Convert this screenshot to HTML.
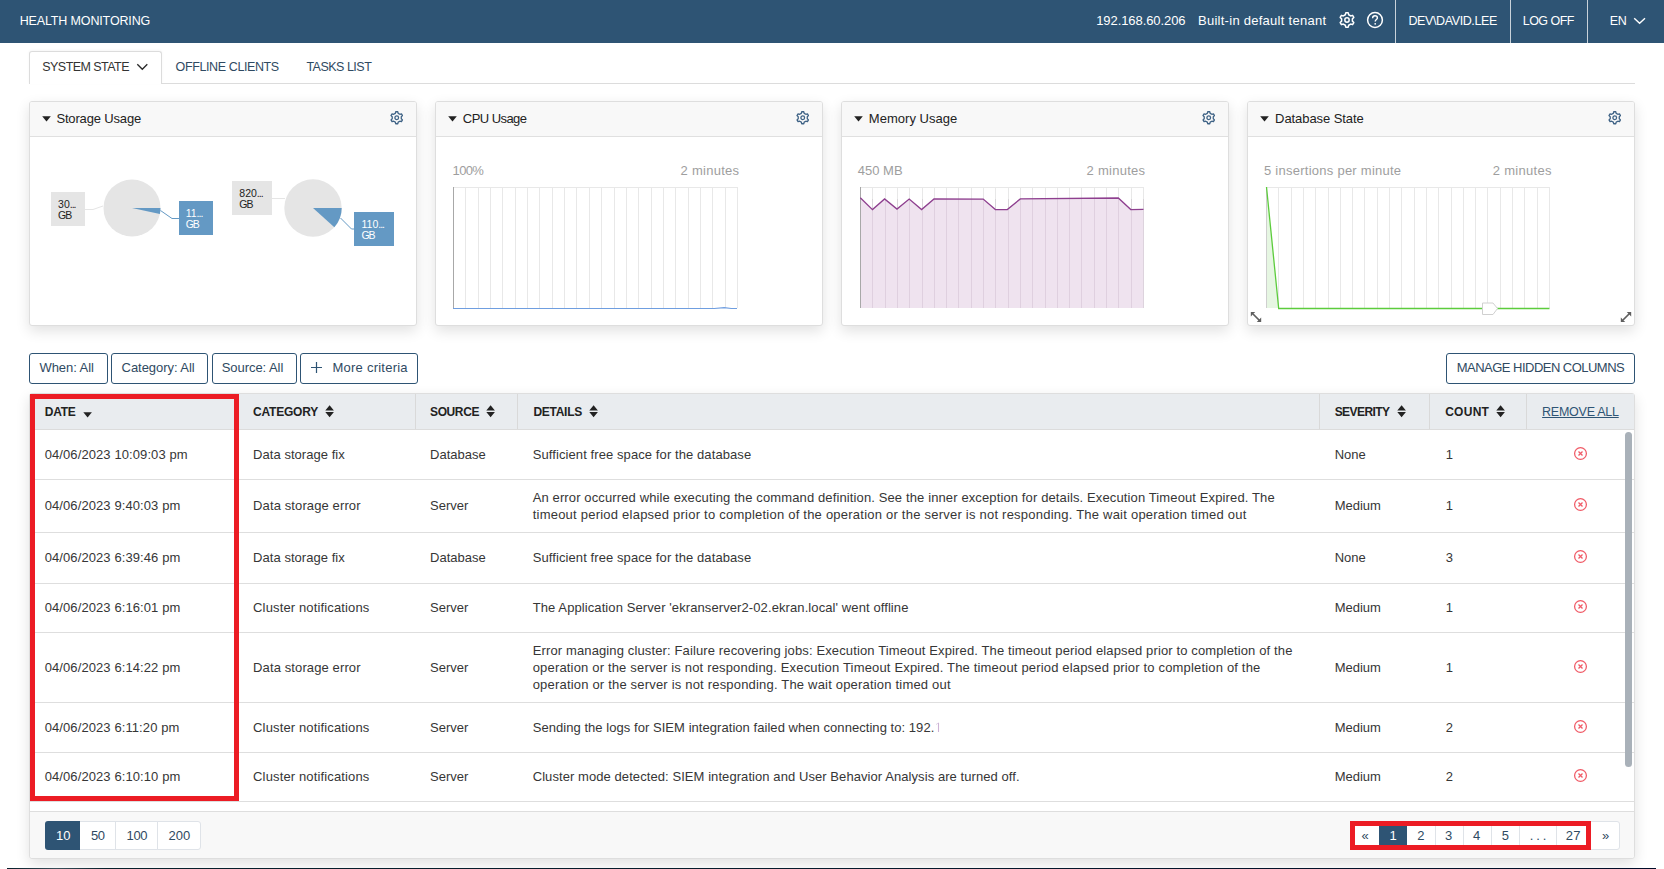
<!DOCTYPE html><html><head><meta charset="utf-8"><style>
*{box-sizing:border-box;margin:0;padding:0}
html,body{width:1664px;height:869px;overflow:hidden;background:#fff;font-family:"Liberation Sans",sans-serif;color:#333}
.abs{position:absolute}
.t{position:absolute;white-space:nowrap;line-height:17px;font-size:13px}
</style></head><body>

<div class="abs" style="left:0;top:0;width:1664px;height:43px;background:#2e5474"></div>
<div class="t" style="left:19.70px;top:12.50px;font-size:12.5px;color:#ffffff;letter-spacing:-0.142px;">HEALTH MONITORING</div>
<div class="t" style="left:1096.20px;top:12.00px;font-size:13px;color:#ffffff;letter-spacing:-0.074px;">192.168.60.206</div>
<div class="t" style="left:1198.00px;top:12.00px;font-size:13px;color:#ffffff;letter-spacing:0.267px;">Built-in default tenant</div>
<div class="abs" style="left:1338.5px;top:12px"><svg width="16" height="16" viewBox="0 0 16 16"><path d="M6.30,2.76 L6.79,0.85 L9.21,0.85 L9.70,2.76 L11.69,3.91 L13.59,3.38 L14.80,5.47 L13.39,6.85 L13.39,9.15 L14.80,10.53 L13.59,12.62 L11.69,12.09 L9.70,13.24 L9.21,15.15 L6.79,15.15 L6.30,13.24 L4.31,12.09 L2.41,12.62 L1.20,10.53 L2.61,9.15 L2.61,6.85 L1.20,5.47 L2.41,3.38 L4.31,3.91 Z" fill="none" stroke="#fff" stroke-width="1.5" stroke-linejoin="round"/><circle cx="8.0" cy="8.0" r="2.17" fill="none" stroke="#fff" stroke-width="1.5"/></svg></div>
<svg class="abs" style="left:1366px;top:11px" width="18" height="18"><circle cx="9" cy="9" r="7.4" fill="none" stroke="#fff" stroke-width="1.5"/><path d="M6.6,7.2 C6.6,5.6 7.7,4.8 9,4.8 C10.4,4.8 11.4,5.7 11.4,6.9 C11.4,8.4 9.2,8.6 9.2,10.4" fill="none" stroke="#fff" stroke-width="1.4"/><circle cx="9.2" cy="12.8" r="0.9" fill="#fff"/></svg>
<div class="abs" style="left:1395px;top:0;width:1px;height:43px;background:#c9d2da"></div>
<div class="abs" style="left:1510px;top:0;width:1px;height:43px;background:#c9d2da"></div>
<div class="abs" style="left:1587px;top:0;width:1px;height:43px;background:#c9d2da"></div>
<div class="t" style="left:1408.40px;top:12.50px;font-size:12.5px;color:#ffffff;letter-spacing:-0.387px;">DEV\DAVID.LEE</div>
<div class="t" style="left:1522.70px;top:12.50px;font-size:12.5px;color:#ffffff;letter-spacing:-0.511px;">LOG OFF</div>
<div class="t" style="left:1609.70px;top:12.50px;font-size:12.5px;color:#ffffff;letter-spacing:-0.264px;">EN</div>
<svg class="abs" style="left:1633px;top:15px" width="14" height="10"><path d="M1.2,3.2 L6.6,8.3 L12,3.2" fill="none" stroke="#fff" stroke-width="1.4"/></svg>
<div class="abs" style="left:30px;top:83px;width:1605px;height:1px;background:#dcdcdc"></div>
<div class="abs" style="left:29px;top:51px;width:133px;height:33px;border:1px solid #dcdcdc;border-bottom:none;border-radius:3px 3px 0 0;background:#fff;box-shadow:0 -1px 3px rgba(0,0,0,0.04)"></div>
<div class="t" style="left:42.30px;top:58.50px;font-size:12.5px;color:#333;letter-spacing:-0.555px;">SYSTEM STATE</div>
<svg class="abs" style="left:136px;top:61px" width="14" height="10"><path d="M1.3,3.3 L6.3,8.3 L11.3,3.3" fill="none" stroke="#2a2a2a" stroke-width="1.35"/></svg>
<div class="t" style="left:175.60px;top:58.50px;font-size:12.5px;color:#2f4a62;letter-spacing:-0.389px;">OFFLINE CLIENTS</div>
<div class="t" style="left:306.40px;top:58.50px;font-size:12.5px;color:#2f4a62;letter-spacing:-0.503px;">TASKS LIST</div>
<div class="abs" style="left:29px;top:101px;width:388px;height:225px;border:1px solid #dedede;border-radius:3px;background:#fff;box-shadow:0 5px 14px rgba(0,0,0,0.12)"></div>
<div class="abs" style="left:30px;top:102px;width:386px;height:35px;background:#f8f8f8;border-bottom:1px solid #e0e0e0;border-radius:2px 2px 0 0"></div>
<svg class="abs" style="left:42px;top:116px" width="10" height="7"><path d="M0.2,0.2 L8.8,0.2 L4.5,5.6 Z" fill="#222"/></svg>
<div class="t" style="left:56.40px;top:110.00px;font-size:13px;color:#222;letter-spacing:-0.160px;">Storage Usage</div>
<div class="abs" style="left:389.5px;top:110.9px"><svg width="13.5" height="13.5" viewBox="0 0 13.5 13.5"><path d="M5.32,2.34 L5.73,0.74 L7.77,0.74 L8.18,2.34 L9.85,3.30 L11.45,2.86 L12.47,4.62 L11.28,5.79 L11.28,7.71 L12.47,8.88 L11.45,10.64 L9.85,10.20 L8.18,11.16 L7.77,12.76 L5.73,12.76 L5.32,11.16 L3.65,10.20 L2.05,10.64 L1.03,8.88 L2.22,7.71 L2.22,5.79 L1.03,4.62 L2.05,2.86 L3.65,3.30 Z" fill="none" stroke="#3e6285" stroke-width="1.3" stroke-linejoin="round"/><circle cx="6.75" cy="6.75" r="1.83" fill="none" stroke="#3e6285" stroke-width="1.3"/></svg></div>
<div class="abs" style="left:435px;top:101px;width:388px;height:225px;border:1px solid #dedede;border-radius:3px;background:#fff;box-shadow:0 5px 14px rgba(0,0,0,0.12)"></div>
<div class="abs" style="left:436px;top:102px;width:386px;height:35px;background:#f8f8f8;border-bottom:1px solid #e0e0e0;border-radius:2px 2px 0 0"></div>
<svg class="abs" style="left:448px;top:116px" width="10" height="7"><path d="M0.2,0.2 L8.8,0.2 L4.5,5.6 Z" fill="#222"/></svg>
<div class="t" style="left:462.80px;top:110.00px;font-size:13px;color:#222;letter-spacing:-0.554px;">CPU Usage</div>
<div class="abs" style="left:795.5px;top:110.9px"><svg width="13.5" height="13.5" viewBox="0 0 13.5 13.5"><path d="M5.32,2.34 L5.73,0.74 L7.77,0.74 L8.18,2.34 L9.85,3.30 L11.45,2.86 L12.47,4.62 L11.28,5.79 L11.28,7.71 L12.47,8.88 L11.45,10.64 L9.85,10.20 L8.18,11.16 L7.77,12.76 L5.73,12.76 L5.32,11.16 L3.65,10.20 L2.05,10.64 L1.03,8.88 L2.22,7.71 L2.22,5.79 L1.03,4.62 L2.05,2.86 L3.65,3.30 Z" fill="none" stroke="#3e6285" stroke-width="1.3" stroke-linejoin="round"/><circle cx="6.75" cy="6.75" r="1.83" fill="none" stroke="#3e6285" stroke-width="1.3"/></svg></div>
<div class="abs" style="left:841px;top:101px;width:388px;height:225px;border:1px solid #dedede;border-radius:3px;background:#fff;box-shadow:0 5px 14px rgba(0,0,0,0.12)"></div>
<div class="abs" style="left:842px;top:102px;width:386px;height:35px;background:#f8f8f8;border-bottom:1px solid #e0e0e0;border-radius:2px 2px 0 0"></div>
<svg class="abs" style="left:854px;top:116px" width="10" height="7"><path d="M0.2,0.2 L8.8,0.2 L4.5,5.6 Z" fill="#222"/></svg>
<div class="t" style="left:868.80px;top:110.00px;font-size:13px;color:#222;letter-spacing:0.033px;">Memory Usage</div>
<div class="abs" style="left:1201.5px;top:110.9px"><svg width="13.5" height="13.5" viewBox="0 0 13.5 13.5"><path d="M5.32,2.34 L5.73,0.74 L7.77,0.74 L8.18,2.34 L9.85,3.30 L11.45,2.86 L12.47,4.62 L11.28,5.79 L11.28,7.71 L12.47,8.88 L11.45,10.64 L9.85,10.20 L8.18,11.16 L7.77,12.76 L5.73,12.76 L5.32,11.16 L3.65,10.20 L2.05,10.64 L1.03,8.88 L2.22,7.71 L2.22,5.79 L1.03,4.62 L2.05,2.86 L3.65,3.30 Z" fill="none" stroke="#3e6285" stroke-width="1.3" stroke-linejoin="round"/><circle cx="6.75" cy="6.75" r="1.83" fill="none" stroke="#3e6285" stroke-width="1.3"/></svg></div>
<div class="abs" style="left:1247px;top:101px;width:388px;height:225px;border:1px solid #dedede;border-radius:3px;background:#fff;box-shadow:0 5px 14px rgba(0,0,0,0.12)"></div>
<div class="abs" style="left:1248px;top:102px;width:386px;height:35px;background:#f8f8f8;border-bottom:1px solid #e0e0e0;border-radius:2px 2px 0 0"></div>
<svg class="abs" style="left:1260px;top:116px" width="10" height="7"><path d="M0.2,0.2 L8.8,0.2 L4.5,5.6 Z" fill="#222"/></svg>
<div class="t" style="left:1275.10px;top:110.00px;font-size:13px;color:#222;letter-spacing:-0.070px;">Database State</div>
<div class="abs" style="left:1607.5px;top:110.9px"><svg width="13.5" height="13.5" viewBox="0 0 13.5 13.5"><path d="M5.32,2.34 L5.73,0.74 L7.77,0.74 L8.18,2.34 L9.85,3.30 L11.45,2.86 L12.47,4.62 L11.28,5.79 L11.28,7.71 L12.47,8.88 L11.45,10.64 L9.85,10.20 L8.18,11.16 L7.77,12.76 L5.73,12.76 L5.32,11.16 L3.65,10.20 L2.05,10.64 L1.03,8.88 L2.22,7.71 L2.22,5.79 L1.03,4.62 L2.05,2.86 L3.65,3.30 Z" fill="none" stroke="#3e6285" stroke-width="1.3" stroke-linejoin="round"/><circle cx="6.75" cy="6.75" r="1.83" fill="none" stroke="#3e6285" stroke-width="1.3"/></svg></div>
<svg class="abs" style="left:0;top:0" width="420" height="330"><circle cx="132" cy="208" r="28.5" fill="#e5e5e5"/><path d="M132,208 L160.5,208 A28.5,28.5 0 0 1 159.88,213.93 Z" fill="#6499c4"/><circle cx="313" cy="208" r="28.7" fill="#e5e5e5"/><path d="M313,208 L341.7,208 A28.7,28.7 0 0 1 334.33,227.20 Z" fill="#6499c4"/><polyline points="85,209.5 93,209.5 103,206" fill="none" stroke="#e5e5e5" stroke-width="1"/><polyline points="160.5,210.5 172,218.5 179,218.5" fill="none" stroke="#6499c4" stroke-width="1"/><polyline points="271.5,198.5 285,198.5" fill="none" stroke="#e5e5e5" stroke-width="1"/><polyline points="340.5,218 351.5,229 354.5,229" fill="none" stroke="#6499c4" stroke-width="1"/></svg>
<div class="abs" style="left:51px;top:192px;width:34px;height:34px;background:#e5e5e5"></div>
<div class="t" style="left:58.10px;top:195.50px;font-size:10.5px;color:#222;">30<span style="letter-spacing:-1px">...</span></div>
<div class="t" style="left:58.10px;top:206.50px;font-size:10.5px;color:#222;letter-spacing:-1.070px;">GB</div>
<div class="abs" style="left:179px;top:201px;width:34px;height:34px;background:#6499c4"></div>
<div class="t" style="left:185.70px;top:204.50px;font-size:10.5px;color:#fff;">11<span style="letter-spacing:-1px">...</span></div>
<div class="t" style="left:185.70px;top:215.50px;font-size:10.5px;color:#fff;letter-spacing:-1.070px;">GB</div>
<div class="abs" style="left:232px;top:181px;width:40px;height:34px;background:#e5e5e5"></div>
<div class="t" style="left:239.30px;top:184.50px;font-size:10.5px;color:#222;">820<span style="letter-spacing:-1px">...</span></div>
<div class="t" style="left:239.30px;top:195.50px;font-size:10.5px;color:#222;letter-spacing:-1.070px;">GB</div>
<div class="abs" style="left:354px;top:212px;width:40px;height:34px;background:#6499c4"></div>
<div class="t" style="left:361.50px;top:215.50px;font-size:10.5px;color:#fff;">110<span style="letter-spacing:-1px">...</span></div>
<div class="t" style="left:361.50px;top:226.50px;font-size:10.5px;color:#fff;letter-spacing:-1.070px;">GB</div>
<div class="t" style="left:452.60px;top:162.00px;font-size:13px;color:#9e9e9e;letter-spacing:-0.649px;">100%</div>
<div class="t" style="left:680.50px;top:162.00px;font-size:13px;color:#9e9e9e;letter-spacing:0.280px;">2 minutes</div>
<div class="t" style="left:857.80px;top:162.00px;font-size:13px;color:#9e9e9e;">450 MB</div>
<div class="t" style="left:1086.50px;top:162.00px;font-size:13px;color:#9e9e9e;letter-spacing:0.280px;">2 minutes</div>
<div class="t" style="left:1264.00px;top:162.00px;font-size:13px;color:#9e9e9e;letter-spacing:0.254px;">5 insertions per minute</div>
<div class="t" style="left:1492.70px;top:162.00px;font-size:13px;color:#9e9e9e;letter-spacing:0.317px;">2 minutes</div>
<svg class="abs" style="left:0;top:0" width="1664" height="330"><line x1="453.50" y1="187" x2="453.50" y2="308" stroke="#e8e8e8" stroke-width="1"/><line x1="465.50" y1="187" x2="465.50" y2="308" stroke="#e8e8e8" stroke-width="1"/><line x1="478.50" y1="187" x2="478.50" y2="308" stroke="#e8e8e8" stroke-width="1"/><line x1="490.50" y1="187" x2="490.50" y2="308" stroke="#e8e8e8" stroke-width="1"/><line x1="502.50" y1="187" x2="502.50" y2="308" stroke="#e8e8e8" stroke-width="1"/><line x1="515.50" y1="187" x2="515.50" y2="308" stroke="#e8e8e8" stroke-width="1"/><line x1="527.50" y1="187" x2="527.50" y2="308" stroke="#e8e8e8" stroke-width="1"/><line x1="539.50" y1="187" x2="539.50" y2="308" stroke="#e8e8e8" stroke-width="1"/><line x1="552.50" y1="187" x2="552.50" y2="308" stroke="#e8e8e8" stroke-width="1"/><line x1="564.50" y1="187" x2="564.50" y2="308" stroke="#e8e8e8" stroke-width="1"/><line x1="576.50" y1="187" x2="576.50" y2="308" stroke="#e8e8e8" stroke-width="1"/><line x1="589.50" y1="187" x2="589.50" y2="308" stroke="#e8e8e8" stroke-width="1"/><line x1="601.50" y1="187" x2="601.50" y2="308" stroke="#e8e8e8" stroke-width="1"/><line x1="614.50" y1="187" x2="614.50" y2="308" stroke="#e8e8e8" stroke-width="1"/><line x1="626.50" y1="187" x2="626.50" y2="308" stroke="#e8e8e8" stroke-width="1"/><line x1="638.50" y1="187" x2="638.50" y2="308" stroke="#e8e8e8" stroke-width="1"/><line x1="651.50" y1="187" x2="651.50" y2="308" stroke="#e8e8e8" stroke-width="1"/><line x1="663.50" y1="187" x2="663.50" y2="308" stroke="#e8e8e8" stroke-width="1"/><line x1="675.50" y1="187" x2="675.50" y2="308" stroke="#e8e8e8" stroke-width="1"/><line x1="688.50" y1="187" x2="688.50" y2="308" stroke="#e8e8e8" stroke-width="1"/><line x1="700.50" y1="187" x2="700.50" y2="308" stroke="#e8e8e8" stroke-width="1"/><line x1="712.50" y1="187" x2="712.50" y2="308" stroke="#e8e8e8" stroke-width="1"/><line x1="725.50" y1="187" x2="725.50" y2="308" stroke="#e8e8e8" stroke-width="1"/><line x1="737.50" y1="187" x2="737.50" y2="308" stroke="#e8e8e8" stroke-width="1"/><line x1="453" y1="187.5" x2="737" y2="187.5" stroke="#e8e8e8" stroke-width="1"/><line x1="453.5" y1="187" x2="453.5" y2="308" stroke="#a8a8a8" stroke-width="1"/><polyline points="453,308.5 714.28,308.5 724.22,307.7 731.3199999999999,308.5 737,308.5" fill="none" stroke="#6f9ee0" stroke-width="1.2"/><line x1="860.50" y1="187" x2="860.50" y2="308" stroke="#e8e8e8" stroke-width="1"/><line x1="872.50" y1="187" x2="872.50" y2="308" stroke="#e8e8e8" stroke-width="1"/><line x1="885.50" y1="187" x2="885.50" y2="308" stroke="#e8e8e8" stroke-width="1"/><line x1="897.50" y1="187" x2="897.50" y2="308" stroke="#e8e8e8" stroke-width="1"/><line x1="909.50" y1="187" x2="909.50" y2="308" stroke="#e8e8e8" stroke-width="1"/><line x1="922.50" y1="187" x2="922.50" y2="308" stroke="#e8e8e8" stroke-width="1"/><line x1="934.50" y1="187" x2="934.50" y2="308" stroke="#e8e8e8" stroke-width="1"/><line x1="946.50" y1="187" x2="946.50" y2="308" stroke="#e8e8e8" stroke-width="1"/><line x1="958.50" y1="187" x2="958.50" y2="308" stroke="#e8e8e8" stroke-width="1"/><line x1="971.50" y1="187" x2="971.50" y2="308" stroke="#e8e8e8" stroke-width="1"/><line x1="983.50" y1="187" x2="983.50" y2="308" stroke="#e8e8e8" stroke-width="1"/><line x1="995.50" y1="187" x2="995.50" y2="308" stroke="#e8e8e8" stroke-width="1"/><line x1="1008.50" y1="187" x2="1008.50" y2="308" stroke="#e8e8e8" stroke-width="1"/><line x1="1020.50" y1="187" x2="1020.50" y2="308" stroke="#e8e8e8" stroke-width="1"/><line x1="1032.50" y1="187" x2="1032.50" y2="308" stroke="#e8e8e8" stroke-width="1"/><line x1="1045.50" y1="187" x2="1045.50" y2="308" stroke="#e8e8e8" stroke-width="1"/><line x1="1057.50" y1="187" x2="1057.50" y2="308" stroke="#e8e8e8" stroke-width="1"/><line x1="1069.50" y1="187" x2="1069.50" y2="308" stroke="#e8e8e8" stroke-width="1"/><line x1="1081.50" y1="187" x2="1081.50" y2="308" stroke="#e8e8e8" stroke-width="1"/><line x1="1094.50" y1="187" x2="1094.50" y2="308" stroke="#e8e8e8" stroke-width="1"/><line x1="1106.50" y1="187" x2="1106.50" y2="308" stroke="#e8e8e8" stroke-width="1"/><line x1="1118.50" y1="187" x2="1118.50" y2="308" stroke="#e8e8e8" stroke-width="1"/><line x1="1131.50" y1="187" x2="1131.50" y2="308" stroke="#e8e8e8" stroke-width="1"/><line x1="1143.50" y1="187" x2="1143.50" y2="308" stroke="#e8e8e8" stroke-width="1"/><line x1="860" y1="187.5" x2="1143" y2="187.5" stroke="#e8e8e8" stroke-width="1"/><polygon points="860,308 860.3,197.8 872.5,209.6 884.6,198.9 897.0,209.1 909.2,199.1 921.6,209.6 934.0,198.9 983.2,199.1 995.4,209.6 1007.3,209.6 1020.3,198.9 1118.3,198.0 1130.8,209.6 1143.5,209.4 1143.5,308" fill="#efe3ef"/><line x1="860.50" y1="199" x2="860.50" y2="308" stroke="rgba(90,50,90,0.10)" stroke-width="1"/><line x1="872.50" y1="199" x2="872.50" y2="308" stroke="rgba(90,50,90,0.10)" stroke-width="1"/><line x1="885.50" y1="199" x2="885.50" y2="308" stroke="rgba(90,50,90,0.10)" stroke-width="1"/><line x1="897.50" y1="199" x2="897.50" y2="308" stroke="rgba(90,50,90,0.10)" stroke-width="1"/><line x1="909.50" y1="199" x2="909.50" y2="308" stroke="rgba(90,50,90,0.10)" stroke-width="1"/><line x1="922.50" y1="199" x2="922.50" y2="308" stroke="rgba(90,50,90,0.10)" stroke-width="1"/><line x1="934.50" y1="199" x2="934.50" y2="308" stroke="rgba(90,50,90,0.10)" stroke-width="1"/><line x1="946.50" y1="199" x2="946.50" y2="308" stroke="rgba(90,50,90,0.10)" stroke-width="1"/><line x1="958.50" y1="199" x2="958.50" y2="308" stroke="rgba(90,50,90,0.10)" stroke-width="1"/><line x1="971.50" y1="199" x2="971.50" y2="308" stroke="rgba(90,50,90,0.10)" stroke-width="1"/><line x1="983.50" y1="199" x2="983.50" y2="308" stroke="rgba(90,50,90,0.10)" stroke-width="1"/><line x1="995.50" y1="199" x2="995.50" y2="308" stroke="rgba(90,50,90,0.10)" stroke-width="1"/><line x1="1008.50" y1="199" x2="1008.50" y2="308" stroke="rgba(90,50,90,0.10)" stroke-width="1"/><line x1="1020.50" y1="199" x2="1020.50" y2="308" stroke="rgba(90,50,90,0.10)" stroke-width="1"/><line x1="1032.50" y1="199" x2="1032.50" y2="308" stroke="rgba(90,50,90,0.10)" stroke-width="1"/><line x1="1045.50" y1="199" x2="1045.50" y2="308" stroke="rgba(90,50,90,0.10)" stroke-width="1"/><line x1="1057.50" y1="199" x2="1057.50" y2="308" stroke="rgba(90,50,90,0.10)" stroke-width="1"/><line x1="1069.50" y1="199" x2="1069.50" y2="308" stroke="rgba(90,50,90,0.10)" stroke-width="1"/><line x1="1081.50" y1="199" x2="1081.50" y2="308" stroke="rgba(90,50,90,0.10)" stroke-width="1"/><line x1="1094.50" y1="199" x2="1094.50" y2="308" stroke="rgba(90,50,90,0.10)" stroke-width="1"/><line x1="1106.50" y1="199" x2="1106.50" y2="308" stroke="rgba(90,50,90,0.10)" stroke-width="1"/><line x1="1118.50" y1="199" x2="1118.50" y2="308" stroke="rgba(90,50,90,0.10)" stroke-width="1"/><line x1="1131.50" y1="199" x2="1131.50" y2="308" stroke="rgba(90,50,90,0.10)" stroke-width="1"/><line x1="1143.50" y1="199" x2="1143.50" y2="308" stroke="rgba(90,50,90,0.10)" stroke-width="1"/><line x1="860.5" y1="187" x2="860.5" y2="308" stroke="#a8a8a8" stroke-width="1"/><polyline points="860.3,197.8 872.5,209.6 884.6,198.9 897.0,209.1 909.2,199.1 921.6,209.6 934.0,198.9 983.2,199.1 995.4,209.6 1007.3,209.6 1020.3,198.9 1118.3,198.0 1130.8,209.6 1143.5,209.4" fill="none" stroke="#8e3f8f" stroke-width="1.3"/><line x1="1266.50" y1="187" x2="1266.50" y2="308" stroke="#e8e8e8" stroke-width="1"/><line x1="1278.50" y1="187" x2="1278.50" y2="308" stroke="#e8e8e8" stroke-width="1"/><line x1="1291.50" y1="187" x2="1291.50" y2="308" stroke="#e8e8e8" stroke-width="1"/><line x1="1303.50" y1="187" x2="1303.50" y2="308" stroke="#e8e8e8" stroke-width="1"/><line x1="1315.50" y1="187" x2="1315.50" y2="308" stroke="#e8e8e8" stroke-width="1"/><line x1="1328.50" y1="187" x2="1328.50" y2="308" stroke="#e8e8e8" stroke-width="1"/><line x1="1340.50" y1="187" x2="1340.50" y2="308" stroke="#e8e8e8" stroke-width="1"/><line x1="1352.50" y1="187" x2="1352.50" y2="308" stroke="#e8e8e8" stroke-width="1"/><line x1="1364.50" y1="187" x2="1364.50" y2="308" stroke="#e8e8e8" stroke-width="1"/><line x1="1377.50" y1="187" x2="1377.50" y2="308" stroke="#e8e8e8" stroke-width="1"/><line x1="1389.50" y1="187" x2="1389.50" y2="308" stroke="#e8e8e8" stroke-width="1"/><line x1="1401.50" y1="187" x2="1401.50" y2="308" stroke="#e8e8e8" stroke-width="1"/><line x1="1414.50" y1="187" x2="1414.50" y2="308" stroke="#e8e8e8" stroke-width="1"/><line x1="1426.50" y1="187" x2="1426.50" y2="308" stroke="#e8e8e8" stroke-width="1"/><line x1="1438.50" y1="187" x2="1438.50" y2="308" stroke="#e8e8e8" stroke-width="1"/><line x1="1451.50" y1="187" x2="1451.50" y2="308" stroke="#e8e8e8" stroke-width="1"/><line x1="1463.50" y1="187" x2="1463.50" y2="308" stroke="#e8e8e8" stroke-width="1"/><line x1="1475.50" y1="187" x2="1475.50" y2="308" stroke="#e8e8e8" stroke-width="1"/><line x1="1487.50" y1="187" x2="1487.50" y2="308" stroke="#e8e8e8" stroke-width="1"/><line x1="1500.50" y1="187" x2="1500.50" y2="308" stroke="#e8e8e8" stroke-width="1"/><line x1="1512.50" y1="187" x2="1512.50" y2="308" stroke="#e8e8e8" stroke-width="1"/><line x1="1524.50" y1="187" x2="1524.50" y2="308" stroke="#e8e8e8" stroke-width="1"/><line x1="1537.50" y1="187" x2="1537.50" y2="308" stroke="#e8e8e8" stroke-width="1"/><line x1="1549.50" y1="187" x2="1549.50" y2="308" stroke="#e8e8e8" stroke-width="1"/><line x1="1266" y1="187.5" x2="1549" y2="187.5" stroke="#e8e8e8" stroke-width="1"/><polygon points="1266,187 1278.7,308 1266,308" fill="#e6f6e2"/><line x1="1266.5" y1="187" x2="1266.5" y2="308" stroke="#cfcfcf" stroke-width="1"/><polyline points="1266.5,187 1278.7,308.5 1549.5,308.5" fill="none" stroke="#5ccc3c" stroke-width="1.3"/><path d="M1482.5,303 L1493,303 L1497.5,308.5 L1493,314.5 L1482.5,314.5 Z" fill="#fff" stroke="#d0d0d0" stroke-width="1"/><g fill="#5f5f5f"><line x1="1253" y1="314" x2="1259.5" y2="320.5" stroke="#5f5f5f" stroke-width="1.7"/><path d="M1250.8,312 L1255.2,312 L1250.8,316.4Z"/><path d="M1261.2,317.6 L1261.2,322 L1256.8,322Z"/></g><g fill="#5f5f5f"><line x1="1623" y1="320" x2="1629.5" y2="313.5" stroke="#5f5f5f" stroke-width="1.7"/><path d="M1620.8,317.6 L1620.8,322 L1625.2,322Z"/><path d="M1631.2,312 L1631.2,316.4 L1626.8,312Z"/></g></svg>
<div class="abs" style="left:29px;top:353px;width:79px;height:31px;border:1px solid #2e5474;border-radius:3px;background:#fff"></div>
<div class="t" style="left:39.50px;top:359.00px;font-size:13px;color:#2f4a62;letter-spacing:-0.064px;">When: All</div>
<div class="abs" style="left:111px;top:353px;width:97px;height:31px;border:1px solid #2e5474;border-radius:3px;background:#fff"></div>
<div class="t" style="left:121.60px;top:359.00px;font-size:13px;color:#2f4a62;letter-spacing:-0.058px;">Category: All</div>
<div class="abs" style="left:212px;top:353px;width:85px;height:31px;border:1px solid #2e5474;border-radius:3px;background:#fff"></div>
<div class="t" style="left:221.70px;top:359.00px;font-size:13px;color:#2f4a62;letter-spacing:-0.054px;">Source: All</div>
<div class="abs" style="left:300px;top:353px;width:118px;height:31px;border:1px solid #2e5474;border-radius:3px;background:#fff"></div>
<div class="t" style="left:332.50px;top:359.00px;font-size:13px;color:#2f4a62;letter-spacing:0.239px;">More criteria</div>
<svg class="abs" style="left:311px;top:362px" width="11" height="11"><path d="M5.5,0 V11 M0,5.5 H11" stroke="#2e5474" stroke-width="1.2"/></svg>
<div class="abs" style="left:1446px;top:353px;width:189px;height:31px;border:1px solid #2e5474;border-radius:3px;background:#fff"></div>
<div class="t" style="left:1456.80px;top:359.00px;font-size:13px;color:#2f4a62;letter-spacing:-0.525px;">MANAGE HIDDEN COLUMNS</div>
<div class="abs" style="left:29px;top:393px;width:1606px;height:466px;border:1px solid #dedede;border-radius:3px;background:#fff;box-shadow:0 5px 14px rgba(0,0,0,0.12)"></div>
<div class="abs" style="left:30px;top:394px;width:1604px;height:36px;background:#e9ecef;border-bottom:1px solid #dcdcdc"></div>
<div class="abs" style="left:238px;top:394px;width:1px;height:35px;background:#d9d9d9"></div>
<div class="abs" style="left:415px;top:394px;width:1px;height:35px;background:#d9d9d9"></div>
<div class="abs" style="left:517px;top:394px;width:1px;height:35px;background:#d9d9d9"></div>
<div class="abs" style="left:1319px;top:394px;width:1px;height:35px;background:#d9d9d9"></div>
<div class="abs" style="left:1429px;top:394px;width:1px;height:35px;background:#d9d9d9"></div>
<div class="abs" style="left:1526px;top:394px;width:1px;height:35px;background:#d9d9d9"></div>
<div class="t" style="left:44.70px;top:403.50px;font-size:12px;color:#222;font-weight:bold;letter-spacing:-0.225px;">DATE</div>
<div class="t" style="left:253.10px;top:403.50px;font-size:12px;color:#222;font-weight:bold;letter-spacing:-0.224px;">CATEGORY</div>
<div class="t" style="left:430.10px;top:403.50px;font-size:12px;color:#222;font-weight:bold;letter-spacing:-0.408px;">SOURCE</div>
<div class="t" style="left:533.40px;top:403.50px;font-size:12px;color:#222;font-weight:bold;letter-spacing:-0.274px;">DETAILS</div>
<div class="t" style="left:1334.70px;top:403.50px;font-size:12px;color:#222;font-weight:bold;letter-spacing:-0.579px;">SEVERITY</div>
<div class="t" style="left:1445.20px;top:403.50px;font-size:12px;color:#222;font-weight:bold;letter-spacing:0.260px;">COUNT</div>
<svg class="abs" style="left:82.5px;top:411.5px" width="10" height="7"><path d="M0.3,0.3 L8.9,0.3 L4.6,5.6Z" fill="#222"/></svg>
<svg class="abs" style="left:324.8px;top:405px" width="10" height="13"><path d="M0.3,5.6 L4.6,0.3 L8.9,5.6Z M0.3,6.9 L4.6,12.2 L8.9,6.9Z" fill="#222"/></svg>
<svg class="abs" style="left:486.2px;top:405px" width="10" height="13"><path d="M0.3,5.6 L4.6,0.3 L8.9,5.6Z M0.3,6.9 L4.6,12.2 L8.9,6.9Z" fill="#222"/></svg>
<svg class="abs" style="left:589px;top:405px" width="10" height="13"><path d="M0.3,5.6 L4.6,0.3 L8.9,5.6Z M0.3,6.9 L4.6,12.2 L8.9,6.9Z" fill="#222"/></svg>
<svg class="abs" style="left:1397.4px;top:405px" width="10" height="13"><path d="M0.3,5.6 L4.6,0.3 L8.9,5.6Z M0.3,6.9 L4.6,12.2 L8.9,6.9Z" fill="#222"/></svg>
<svg class="abs" style="left:1495.8px;top:405px" width="10" height="13"><path d="M0.3,5.6 L4.6,0.3 L8.9,5.6Z M0.3,6.9 L4.6,12.2 L8.9,6.9Z" fill="#222"/></svg>
<div class="t" style="left:1542.10px;top:403.50px;font-size:12.5px;color:#2e5474;letter-spacing:-0.256px;text-decoration:underline;text-underline-offset:1px;">REMOVE ALL</div>
<div class="abs" style="left:30px;top:479px;width:1604px;height:1px;background:#dedede"></div>
<div class="t" style="left:44.70px;top:445.70px;font-size:13px;color:#363636;letter-spacing:0.093px;">04/06/2023 10:09:03 pm</div>
<div class="t" style="left:253.10px;top:445.70px;font-size:13px;color:#363636;letter-spacing:0.044px;">Data storage fix</div>
<div class="t" style="left:430.10px;top:445.70px;font-size:13px;color:#363636;">Database</div>
<div class="t" style="left:532.70px;top:445.70px;font-size:13px;color:#363636;letter-spacing:0.091px;">Sufficient free space for the database</div>
<div class="t" style="left:1334.70px;top:445.70px;font-size:13px;color:#363636;">None</div>
<div class="t" style="left:1445.70px;top:445.70px;font-size:13px;color:#363636;">1</div>
<svg class="abs" style="left:1573.0px;top:445.6px" width="15" height="15"><circle cx="7.5" cy="7.5" r="5.9" fill="none" stroke="#f05a66" stroke-width="1.25"/><path d="M5.5,5.5 L9.5,9.5 M9.5,5.5 L5.5,9.5" stroke="#f05a66" stroke-width="1.3"/></svg>
<div class="abs" style="left:30px;top:532px;width:1604px;height:1px;background:#dedede"></div>
<div class="t" style="left:44.70px;top:497.20px;font-size:13px;color:#363636;letter-spacing:0.094px;">04/06/2023 9:40:03 pm</div>
<div class="t" style="left:253.10px;top:497.20px;font-size:13px;color:#363636;letter-spacing:0.112px;">Data storage error</div>
<div class="t" style="left:430.10px;top:497.20px;font-size:13px;color:#363636;">Server</div>
<div class="t" style="left:532.70px;top:488.70px;font-size:13px;color:#363636;letter-spacing:0.123px;">An error occurred while executing the command definition. See the inner exception for details. Execution Timeout Expired. The</div>
<div class="t" style="left:532.70px;top:505.70px;font-size:13px;color:#363636;letter-spacing:0.228px;">timeout period elapsed prior to completion of the operation or the server is not responding. The wait operation timed out</div>
<div class="t" style="left:1334.70px;top:497.20px;font-size:13px;color:#363636;">Medium</div>
<div class="t" style="left:1445.70px;top:497.20px;font-size:13px;color:#363636;">1</div>
<svg class="abs" style="left:1573.0px;top:497.1px" width="15" height="15"><circle cx="7.5" cy="7.5" r="5.9" fill="none" stroke="#f05a66" stroke-width="1.25"/><path d="M5.5,5.5 L9.5,9.5 M9.5,5.5 L5.5,9.5" stroke="#f05a66" stroke-width="1.3"/></svg>
<div class="abs" style="left:30px;top:583px;width:1604px;height:1px;background:#dedede"></div>
<div class="t" style="left:44.70px;top:549.20px;font-size:13px;color:#363636;letter-spacing:0.094px;">04/06/2023 6:39:46 pm</div>
<div class="t" style="left:253.10px;top:549.20px;font-size:13px;color:#363636;letter-spacing:0.044px;">Data storage fix</div>
<div class="t" style="left:430.10px;top:549.20px;font-size:13px;color:#363636;">Database</div>
<div class="t" style="left:532.70px;top:549.20px;font-size:13px;color:#363636;letter-spacing:0.091px;">Sufficient free space for the database</div>
<div class="t" style="left:1334.70px;top:549.20px;font-size:13px;color:#363636;">None</div>
<div class="t" style="left:1445.70px;top:549.20px;font-size:13px;color:#363636;">3</div>
<svg class="abs" style="left:1573.0px;top:549.1px" width="15" height="15"><circle cx="7.5" cy="7.5" r="5.9" fill="none" stroke="#f05a66" stroke-width="1.25"/><path d="M5.5,5.5 L9.5,9.5 M9.5,5.5 L5.5,9.5" stroke="#f05a66" stroke-width="1.3"/></svg>
<div class="abs" style="left:30px;top:632px;width:1604px;height:1px;background:#dedede"></div>
<div class="t" style="left:44.70px;top:599.20px;font-size:13px;color:#363636;letter-spacing:0.094px;">04/06/2023 6:16:01 pm</div>
<div class="t" style="left:253.10px;top:599.20px;font-size:13px;color:#363636;letter-spacing:0.138px;">Cluster notifications</div>
<div class="t" style="left:430.10px;top:599.20px;font-size:13px;color:#363636;">Server</div>
<div class="t" style="left:532.70px;top:599.20px;font-size:13px;color:#363636;letter-spacing:0.095px;">The Application Server &#x27;ekranserver2-02.ekran.local&#x27; went offline</div>
<div class="t" style="left:1334.70px;top:599.20px;font-size:13px;color:#363636;">Medium</div>
<div class="t" style="left:1445.70px;top:599.20px;font-size:13px;color:#363636;">1</div>
<svg class="abs" style="left:1573.0px;top:599.1px" width="15" height="15"><circle cx="7.5" cy="7.5" r="5.9" fill="none" stroke="#f05a66" stroke-width="1.25"/><path d="M5.5,5.5 L9.5,9.5 M9.5,5.5 L5.5,9.5" stroke="#f05a66" stroke-width="1.3"/></svg>
<div class="abs" style="left:30px;top:702px;width:1604px;height:1px;background:#dedede"></div>
<div class="t" style="left:44.70px;top:658.70px;font-size:13px;color:#363636;letter-spacing:0.094px;">04/06/2023 6:14:22 pm</div>
<div class="t" style="left:253.10px;top:658.70px;font-size:13px;color:#363636;letter-spacing:0.112px;">Data storage error</div>
<div class="t" style="left:430.10px;top:658.70px;font-size:13px;color:#363636;">Server</div>
<div class="t" style="left:532.70px;top:641.70px;font-size:13px;color:#363636;letter-spacing:0.128px;">Error managing cluster: Failure recovering jobs: Execution Timeout Expired. The timeout period elapsed prior to completion of the</div>
<div class="t" style="left:532.70px;top:658.70px;font-size:13px;color:#363636;letter-spacing:0.173px;">operation or the server is not responding. Execution Timeout Expired. The timeout period elapsed prior to completion of the</div>
<div class="t" style="left:532.70px;top:675.70px;font-size:13px;color:#363636;letter-spacing:0.191px;">operation or the server is not responding. The wait operation timed out</div>
<div class="t" style="left:1334.70px;top:658.70px;font-size:13px;color:#363636;">Medium</div>
<div class="t" style="left:1445.70px;top:658.70px;font-size:13px;color:#363636;">1</div>
<svg class="abs" style="left:1573.0px;top:658.6px" width="15" height="15"><circle cx="7.5" cy="7.5" r="5.9" fill="none" stroke="#f05a66" stroke-width="1.25"/><path d="M5.5,5.5 L9.5,9.5 M9.5,5.5 L5.5,9.5" stroke="#f05a66" stroke-width="1.3"/></svg>
<div class="abs" style="left:30px;top:752px;width:1604px;height:1px;background:#dedede"></div>
<div class="t" style="left:44.70px;top:718.70px;font-size:13px;color:#363636;letter-spacing:0.094px;">04/06/2023 6:11:20 pm</div>
<div class="t" style="left:253.10px;top:718.70px;font-size:13px;color:#363636;letter-spacing:0.138px;">Cluster notifications</div>
<div class="t" style="left:430.10px;top:718.70px;font-size:13px;color:#363636;">Server</div>
<div class="t" style="left:532.70px;top:718.70px;font-size:13px;color:#363636;letter-spacing:0.050px;">Sending the logs for SIEM integration failed when connecting to: 192.</div>
<svg class="abs" style="left:933px;top:721.7px" width="8" height="11"><path d="M5.5,0.8 V10" stroke="#cdb3d6" stroke-width="1.1"/><path d="M5.2,1 L3,2.6" stroke="#e2d4e8" stroke-width="1"/></svg>
<div class="t" style="left:1334.70px;top:718.70px;font-size:13px;color:#363636;">Medium</div>
<div class="t" style="left:1445.70px;top:718.70px;font-size:13px;color:#363636;">2</div>
<svg class="abs" style="left:1573.0px;top:718.6px" width="15" height="15"><circle cx="7.5" cy="7.5" r="5.9" fill="none" stroke="#f05a66" stroke-width="1.25"/><path d="M5.5,5.5 L9.5,9.5 M9.5,5.5 L5.5,9.5" stroke="#f05a66" stroke-width="1.3"/></svg>
<div class="abs" style="left:30px;top:801px;width:1604px;height:1px;background:#dedede"></div>
<div class="t" style="left:44.70px;top:768.20px;font-size:13px;color:#363636;letter-spacing:0.094px;">04/06/2023 6:10:10 pm</div>
<div class="t" style="left:253.10px;top:768.20px;font-size:13px;color:#363636;letter-spacing:0.138px;">Cluster notifications</div>
<div class="t" style="left:430.10px;top:768.20px;font-size:13px;color:#363636;">Server</div>
<div class="t" style="left:532.70px;top:768.20px;font-size:13px;color:#363636;letter-spacing:0.073px;">Cluster mode detected: SIEM integration and User Behavior Analysis are turned off.</div>
<div class="t" style="left:1334.70px;top:768.20px;font-size:13px;color:#363636;">Medium</div>
<div class="t" style="left:1445.70px;top:768.20px;font-size:13px;color:#363636;">2</div>
<svg class="abs" style="left:1573.0px;top:768.1px" width="15" height="15"><circle cx="7.5" cy="7.5" r="5.9" fill="none" stroke="#f05a66" stroke-width="1.25"/><path d="M5.5,5.5 L9.5,9.5 M9.5,5.5 L5.5,9.5" stroke="#f05a66" stroke-width="1.3"/></svg>
<div class="abs" style="left:30px;top:811px;width:1604px;height:1px;background:#dedede"></div>
<div class="abs" style="left:1625px;top:432px;width:7px;height:335px;background:#a9b1b9;border-radius:4px"></div>
<div class="abs" style="left:30px;top:812px;width:1604px;height:46px;background:#f8f8f8;border-radius:0 0 3px 3px"></div>
<div class="abs" style="left:79px;top:821px;width:37px;height:29px;background:#fff;border:1px solid #dfe3e8;"></div>
<div class="t" style="left:91.10px;top:827.00px;font-size:13px;color:#2f4a62;letter-spacing:-0.659px;">50</div>
<div class="abs" style="left:115px;top:821px;width:43px;height:29px;background:#fff;border:1px solid #dfe3e8;"></div>
<div class="t" style="left:126.50px;top:827.00px;font-size:13px;color:#2f4a62;letter-spacing:-0.345px;">100</div>
<div class="abs" style="left:157px;top:821px;width:44px;height:29px;background:#fff;border:1px solid #dfe3e8;border-radius:0 3px 3px 0;"></div>
<div class="t" style="left:168.50px;top:827.00px;font-size:13px;color:#2f4a62;letter-spacing:0.005px;">200</div>
<div class="abs" style="left:45px;top:821px;width:35px;height:29px;background:#2e5474;border-radius:3px 0 0 3px;"></div>
<div class="t" style="left:56.00px;top:827.00px;font-size:13px;color:#fff;letter-spacing:0.041px;">10</div>
<div class="abs" style="left:1350px;top:821px;width:30px;height:29px;background:#fff;border:1px solid #dfe3e8;border-radius:3px 0 0 3px;"></div>
<div class="t" style="left:1361.50px;top:827.00px;font-size:13px;color:#2f4a62;letter-spacing:-0.230px;">&laquo;</div>
<div class="abs" style="left:1406px;top:821px;width:30px;height:29px;background:#fff;border:1px solid #dfe3e8;"></div>
<div class="t" style="left:1417.30px;top:827.00px;font-size:13px;color:#2f4a62;letter-spacing:0.270px;">2</div>
<div class="abs" style="left:1435px;top:821px;width:29px;height:29px;background:#fff;border:1px solid #dfe3e8;"></div>
<div class="t" style="left:1445.10px;top:827.00px;font-size:13px;color:#2f4a62;letter-spacing:-0.030px;">3</div>
<div class="abs" style="left:1463px;top:821px;width:29px;height:29px;background:#fff;border:1px solid #dfe3e8;"></div>
<div class="t" style="left:1473.00px;top:827.00px;font-size:13px;color:#2f4a62;letter-spacing:0.570px;">4</div>
<div class="abs" style="left:1491px;top:821px;width:29px;height:29px;background:#fff;border:1px solid #dfe3e8;"></div>
<div class="t" style="left:1501.70px;top:827.00px;font-size:13px;color:#2f4a62;letter-spacing:-0.630px;">5</div>
<div class="abs" style="left:1519px;top:821px;width:38px;height:29px;background:#fff;border:1px solid #dfe3e8;"></div>
<div class="t" style="left:1529.70px;top:827.00px;font-size:13px;color:#2f4a62;letter-spacing:-0.316px;">. . .</div>
<div class="abs" style="left:1556px;top:821px;width:36px;height:29px;background:#fff;border:1px solid #dfe3e8;"></div>
<div class="t" style="left:1565.70px;top:827.00px;font-size:13px;color:#2f4a62;letter-spacing:0.341px;">27</div>
<div class="abs" style="left:1590px;top:821px;width:30px;height:29px;background:#fff;border:1px solid #dfe3e8;border-radius:0 3px 3px 0;"></div>
<div class="t" style="left:1602.00px;top:827.00px;font-size:13px;color:#2f4a62;letter-spacing:-0.530px;">&raquo;</div>
<div class="abs" style="left:1379px;top:821px;width:28px;height:29px;background:#2e5474;"></div>
<div class="t" style="left:1389.40px;top:827.00px;font-size:13px;color:#fff;letter-spacing:-0.930px;">1</div>
<div class="abs" style="left:30px;top:394px;width:209px;height:407px;border:5px solid #ec1c24"></div>
<div class="abs" style="left:1350px;top:821px;width:241px;height:29px;border:5px solid #ec1c24"></div>
<div class="abs" style="left:7px;top:868px;width:1649px;height:1px;background:linear-gradient(90deg,#06202b,#3a4f5a 3%,#06202b 6%,#051a2c 50%,#000c28)"></div>
</body></html>
